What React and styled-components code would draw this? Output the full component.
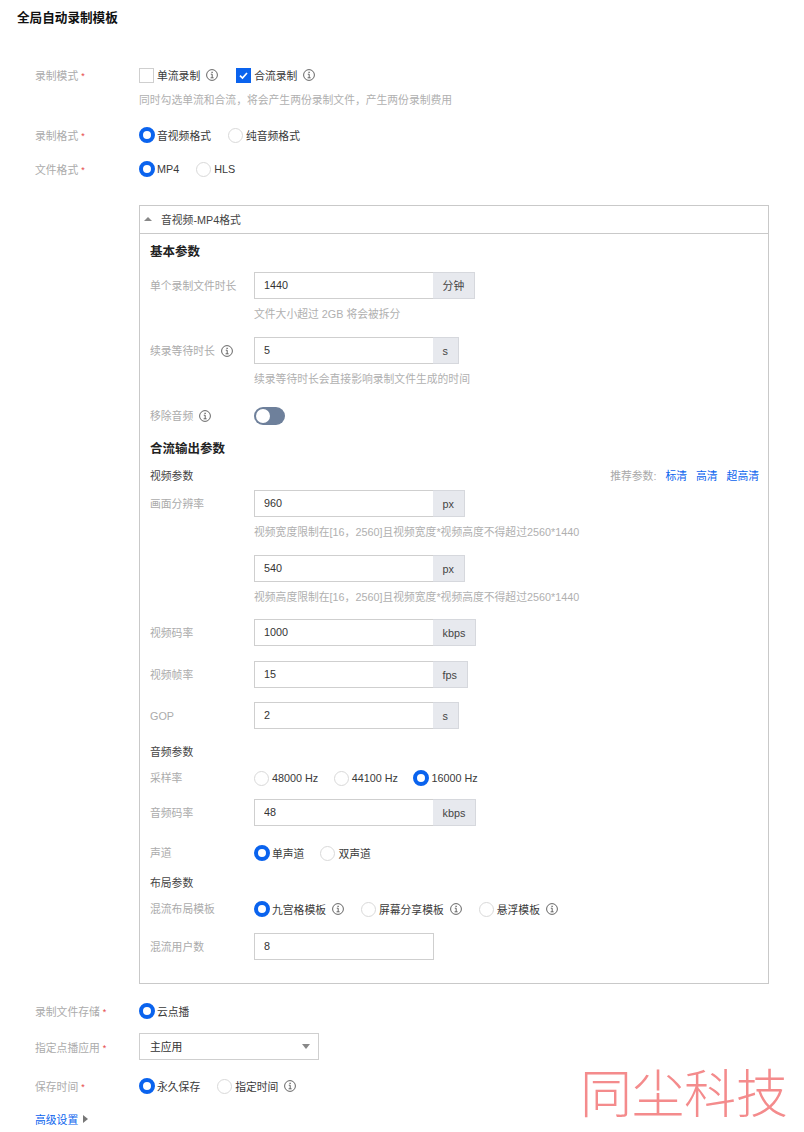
import React from "react";
import styled, { createGlobalStyle } from "styled-components";

const Global = createGlobalStyle`
  html, body { margin: 0; padding: 0; background: #fff; }
  body { font-family: "Liberation Sans", "Noto Sans CJK SC", sans-serif; font-size: 10.8px; color: #3a3a3a; }
  * { box-sizing: border-box; }
`;

const Page = styled.div`
  position: relative;
  width: 804px;
  height: 1132px;
  overflow: hidden;
`;
const Title = styled.h1`
  margin: 0;
  height: 36px;
  padding-left: 17px;
  font-size: 12.6px;
  line-height: 36px;
  font-weight: 700;
  color: #111;
`;
const Form = styled.div`
  padding: 0 35px;
`;
const Row = styled.div`
  display: flex;
  align-items: center;
  margin-top: ${(p) => p.$mt || 0}px;
  min-height: 18px;
`;
const Label = styled.div`
  width: 104px;
  height: 18px;
  flex: none;
  color: #ababab;
  line-height: 18px;
  padding-top: ${(p) => (p.$nudge ? 2 : 0)}px;
  display: flex;
  align-items: center;
  gap: 6px;
`;
const Star = styled.span`
  color: #e54545;
  font-size: 9px;
  margin-left: -3px;
`;
const Options = styled.div`
  display: flex;
  align-items: center;
  gap: ${(p) => p.$gap || 17}px;
`;
const Option = styled.div`
  display: flex;
  align-items: center;
  white-space: nowrap;
`;
const RadioDot = styled.span`
  display: block;
  flex: none;
  border-radius: 50%;
  width: ${(p) => (p.$on ? 16 : 15)}px;
  height: ${(p) => (p.$on ? 16 : 15)}px;
  margin-right: ${(p) => (p.$on ? 2 : 3)}px;
  border: ${(p) => (p.$on ? "4px solid #0a63ee" : "1px solid #d9d9d9")};
  background: #fff;
`;
const Box = styled.span`
  display: flex;
  align-items: center;
  justify-content: center;
  flex: none;
  width: 15px;
  height: 15px;
  margin-right: 3px;
  border: 1px solid ${(p) => (p.$on ? "#0a63ee" : "#cfcfcf")};
  background: ${(p) => (p.$on ? "#0a63ee" : "#fff")};
`;
const Tip = styled.svg`
  display: block;
  flex: none;
  width: 12px;
  height: 12px;
  margin-left: ${(p) => p.$ml ?? 6}px;
  color: #555;
`;
const Hint = styled.div`
  margin-top: ${(p) => p.$mt ?? 7}px;
  margin-left: ${(p) => p.$ml ?? 104}px;
  height: 16px;
  line-height: 16px;
  color: #b0b0b0;
`;
const Panel = styled.section`
  margin: 27px 0 0 104px;
  border: 1px solid #c9c9c9;
`;
const PanelHead = styled.div`
  display: flex;
  align-items: center;
  height: 28px;
  padding: 0 0 1px 4px;
  border-bottom: 1px solid #c9c9c9;
  color: #444;
`;
const Caret = styled.span`
  display: block;
  flex: none;
  width: 0;
  height: 0;
  border-left: 4px solid transparent;
  border-right: 4px solid transparent;
  border-bottom: 4px solid #888;
  margin-right: 9px;
`;
const PanelBody = styled.div`
  padding: 8px 9px 23px 10px;
`;
const Heading = styled.h2`
  margin: ${(p) => p.$mt || 0}px 0 0;
  height: 18px;
  line-height: 21px;
  font-size: 12.5px;
  font-weight: 700;
  color: #222;
`;
const SubHead = styled.div`
  margin-top: ${(p) => p.$mt || 0}px;
  height: 18px;
  line-height: 18px;
  color: #444;
  display: flex;
  justify-content: space-between;
  align-items: center;
`;
const Recommend = styled.div`
  display: flex;
  gap: 9px;
  color: #a9a9a9;
`;
const LinkText = styled.a`
  color: #0a63ee;
`;
const Group = styled.div`
  display: flex;
  height: 27px;
`;
const Input = styled.input`
  display: block;
  width: 180px;
  height: 27px;
  padding: 0 9px 2px;
  margin: 0;
  border: 1px solid #cfcfcf;
  border-radius: 0;
  outline: none;
  font: inherit;
  color: #333;
  background: #fff;
`;
const Addon = styled.div`
  height: 27px;
  line-height: 26px;
  padding: 0 9.6px;
  margin-left: -1px;
  background: #e7e9ee;
  border: 1px solid #d6d8dd;
  border-left: 0;
  color: #444;
`;
const Toggle = styled.div`
  position: relative;
  width: 31px;
  height: 18px;
  border-radius: 9px;
  background: #6e809b;
`;
const Knob = styled.span`
  position: absolute;
  left: 2px;
  top: 2px;
  width: 14px;
  height: 14px;
  border-radius: 50%;
  background: #fff;
`;
const Select = styled.div`
  display: flex;
  align-items: center;
  justify-content: space-between;
  width: 180px;
  height: 27px;
  padding: 0 8px 2px 10px;
  border: 1px solid #cfcfcf;
  color: #333;
`;
const SelectCaret = styled.span`
  display: block;
  width: 0;
  height: 0;
  margin-top: 2px;
  border-left: 4px solid transparent;
  border-right: 4px solid transparent;
  border-top: 5px solid #888;
`;
const More = styled.div`
  display: flex;
  align-items: center;
  gap: 5px;
  height: 18px;
  margin-top: 15px;
  color: #0a63ee;
`;
const MoreCaret = styled.span`
  display: block;
  width: 0;
  height: 0;
  border-top: 4px solid transparent;
  border-bottom: 4px solid transparent;
  border-left: 5px solid #777;
`;
const Watermark = styled.div`
  position: absolute;
  left: 580px;
  top: 1055px;
  font-family: "Noto Sans CJK SC", serif;
  font-size: 52px;
  line-height: 72px;
  font-weight: 300;
  color: #f48b8c;
  white-space: nowrap;
`;

const InfoIcon = ({ ml }) => (
  <Tip $ml={ml} viewBox="0 0 12 12" fill="none" stroke="currentColor">
    <circle cx="6" cy="6" r="5.4" strokeWidth="0.9" />
    <path d="M4.8 5.2H6.2V8.8M4.6 8.8H7.6" strokeWidth="0.9" />
    <path d="M5.5 3.3H6.7" strokeWidth="1.2" />
  </Tip>
);

const Radio = ({ on, children, tip }) => (
  <Option>
    <RadioDot $on={on} />
    {children}
    {tip && <InfoIcon />}
  </Option>
);

const Check = ({ on, children }) => (
  <Option>
    <Box $on={on}>
      {on && (
        <svg width="11" height="11" viewBox="0 0 11 11" fill="none">
          <path d="M2 5.6L4.5 8L9 3" stroke="#fff" strokeWidth="1.7" />
        </svg>
      )}
    </Box>
    {children}
    <InfoIcon />
  </Option>
);

const Req = ({ children }) => (
  <Label $nudge>
    <span>{children}</span>
    <Star>*</Star>
  </Label>
);

const Field = ({ label, value, unit, mt, tip }) => (
  <Row $mt={mt}>
    <Label>
      {label}
      {tip && <InfoIcon ml={0} />}
    </Label>
    <Group>
      <Input readOnly value={value} />
      {unit && <Addon>{unit}</Addon>}
    </Group>
  </Row>
);

export default function App() {
  return (
    <Page>
      <Global />
      <Title>全局自动录制模板</Title>
      <Form>
        <Row $mt={30}>
          <Req>录制模式</Req>
          <Options $gap={18}>
            <Check>单流录制</Check>
            <Check on>合流录制</Check>
          </Options>
        </Row>
        <Hint $mt={8}>同时勾选单流和合流，将会产生两份录制文件，产生两份录制费用</Hint>
        <Row $mt={18}>
          <Req>录制格式</Req>
          <Options>
            <Radio on>音视频格式</Radio>
            <Radio>纯音频格式</Radio>
          </Options>
        </Row>
        <Row $mt={16}>
          <Req>文件格式</Req>
          <Options>
            <Radio on>MP4</Radio>
            <Radio>HLS</Radio>
          </Options>
        </Row>

        <Panel>
          <PanelHead>
            <Caret />
            音视频-MP4格式
          </PanelHead>
          <PanelBody>
            <Heading>基本参数</Heading>
            <Field mt={12} label="单个录制文件时长" value="1440" unit="分钟" />
            <Hint>文件大小超过 2GB 将会被拆分</Hint>
            <Field mt={15} label="续录等待时长" tip value="5" unit="s" />
            <Hint>续录等待时长会直接影响录制文件生成的时间</Hint>
            <Row $mt={20}>
              <Label>
                移除音频
                <InfoIcon ml={0} />
              </Label>
              <Toggle>
                <Knob />
              </Toggle>
            </Row>
            <Heading $mt={14}>合流输出参数</Heading>
            <SubHead $mt={10}>
              视频参数
              <Recommend>
                <span>推荐参数:</span>
                <LinkText>标清</LinkText>
                <LinkText>高清</LinkText>
                <LinkText>超高清</LinkText>
              </Recommend>
            </SubHead>
            <Field mt={5} label="画面分辨率" value="960" unit="px" />
            <Hint>视频宽度限制在[16，2560]且视频宽度*视频高度不得超过2560*1440</Hint>
            <Field mt={15} label="" value="540" unit="px" />
            <Hint>视频高度限制在[16，2560]且视频宽度*视频高度不得超过2560*1440</Hint>
            <Field mt={14} label="视频码率" value="1000" unit="kbps" />
            <Field mt={15} label="视频帧率" value="15" unit="fps" />
            <Field mt={14} label="GOP" value="2" unit="s" />
            <SubHead $mt={14}>音频参数</SubHead>
            <Row $mt={8}>
              <Label>采样率</Label>
              <Options $gap={15.5}>
                <Radio>48000 Hz</Radio>
                <Radio>44100 Hz</Radio>
                <Radio on>16000 Hz</Radio>
              </Options>
            </Row>
            <Field mt={12} label="音频码率" value="48" unit="kbps" />
            <Row $mt={18}>
              <Label>声道</Label>
              <Options $gap={16}>
                <Radio on>单声道</Radio>
                <Radio>双声道</Radio>
              </Options>
            </Row>
            <SubHead $mt={12}>布局参数</SubHead>
            <Row $mt={8}>
              <Label>混流布局模板</Label>
              <Options>
                <Radio on tip>九宫格模板</Radio>
                <Radio tip>屏幕分享模板</Radio>
                <Radio tip>悬浮模板</Radio>
              </Options>
            </Row>
            <Field mt={15} label="混流用户数" value="8" />
          </PanelBody>
        </Panel>

        <Row $mt={18}>
          <Req>录制文件存储</Req>
          <Options>
            <Radio on>云点播</Radio>
          </Options>
        </Row>
        <Row $mt={13}>
          <Req>指定点播应用</Req>
          <Select>
            主应用
            <SelectCaret />
          </Select>
        </Row>
        <Row $mt={17}>
          <Req>保存时间</Req>
          <Options>
            <Radio on>永久保存</Radio>
            <Radio tip>指定时间</Radio>
          </Options>
        </Row>
        <More>
          高级设置
          <MoreCaret />
        </More>
      </Form>
      <Watermark>同尘科技</Watermark>
    </Page>
  );
}
